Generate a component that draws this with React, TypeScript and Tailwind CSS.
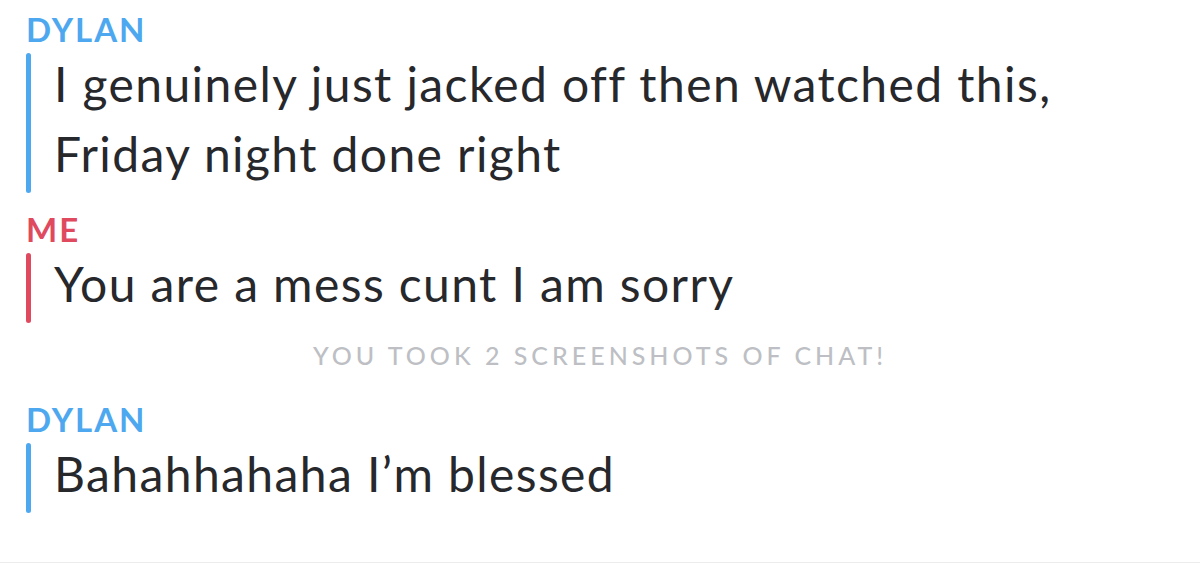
const blue = 'text-[#4ea8f0]';

interface MessageProps {
  name: string;
  color: 'blue' | 'red';
  lines: string[];
}

function Message({ name, color, lines }: MessageProps) {
  const isBlue = color === 'blue';
  return (
    <div className="flex flex-col">
      <div
        className={`text-[33px] leading-[32px] font-bold tracking-[0.06em] ${
          isBlue ? blue : 'text-[#df4a5f]'
        }`}
      >
        {name}
      </div>
      <div className="flex mt-[8px]">
        <div className={`w-[5px] rounded-full ${isBlue ? 'bg-[#4ea8f0]' : 'bg-[#df4a5f]'}`} />
        <div className="pl-[23px] text-[48px] leading-[70px] tracking-[1.4px] text-[#27282c] -mt-[4px] mb-[4px]">
          {lines.map((l) => (
            <div key={l}>{l}</div>
          ))}
        </div>
      </div>
    </div>
  );
}

export default function App() {
  return (
    <div
      className="w-[1200px] h-[564px] bg-white relative overflow-hidden"
      style={{ fontFamily: 'Lato, "Noto Sans", sans-serif' }}
    >
      <div className="flex flex-col pl-[26px] pt-[13px]">
        <Message
          name="DYLAN"
          color="blue"
          lines={['I genuinely just jacked off then watched this,', 'Friday night done right']}
        />
        <div className="mt-[20px]">
          <Message name="ME" color="red" lines={['You are a mess cunt I am sorry']} />
        </div>
        <div className="mt-[20px] pr-[26px] text-center text-[25px] leading-[24px] font-medium tracking-[0.16em] text-[#bdbfc4]">
          YOU TOOK 2 SCREENSHOTS OF CHAT!
        </div>
        <div className="mt-[36px]">
          <Message name="DYLAN" color="blue" lines={['Bahahhahaha I’m blessed']} />
        </div>
      </div>
      <div className="absolute left-0 right-0 bottom-[1px] h-px bg-[#ececec]" />
    </div>
  );
}
